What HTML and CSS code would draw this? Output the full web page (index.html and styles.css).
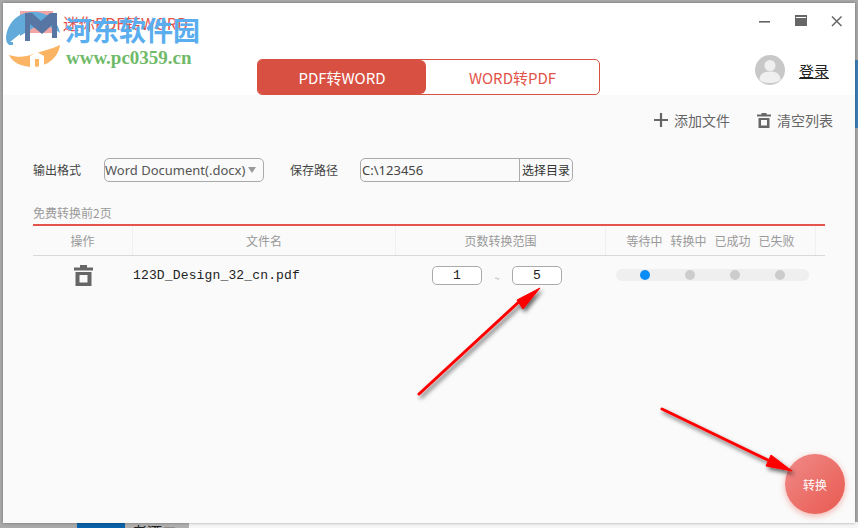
FILE: index.html
```html
<!DOCTYPE html>
<html lang="zh">
<head>
<meta charset="utf-8">
<title>迷你PDF转WORD</title>
<link rel="stylesheet" href="styles.css">
</head>
<body>
<div class="desktop">
  <div class="stripe"></div>
  <div class="taskbar">
    <div class="task-blue"></div>
    <div class="task-text">老酒二</div>
    <div class="task-white"></div>
  </div>
  <div class="window">
    <header class="head">
      <div class="titlebar">
        <div class="app-title">迷你PDF转WORD</div>
        <div class="win-controls">
          <svg class="win-icon" width="12" height="12" viewBox="0 0 12 12"><rect x="0" y="6" width="11" height="1.6" fill="#666"/></svg>
          <svg class="win-icon" width="12" height="12" viewBox="0 0 12 12"><rect x="0" y="0" width="12" height="11" fill="#666"/><rect x="1" y="2" width="10" height="1" fill="#fff"/></svg>
          <svg class="win-icon" width="12" height="12" viewBox="0 0 12 12"><path d="M1 1.5 10.5 11M10.5 1.5 1 11" stroke="#666" stroke-width="1.5" fill="none"/></svg>
        </div>
      </div>
      <div class="tabrow">
        <div class="tabs">
          <div class="tab tab-on">PDF转WORD</div>
          <div class="tab">WORD转PDF</div>
        </div>
        <div class="user">
          <svg width="30" height="30" viewBox="0 0 30 30"><circle cx="15" cy="15" r="15" fill="#c8c8c8"/><circle cx="15" cy="10.5" r="5.5" fill="#efefef"/><path d="M4.5 25c0-6 4-8.5 10.500-8.500s10.500 2.500 10.500 8.500c-2.500 1.800-6 3-10.500 3s-8-1.200-10.500-3z" fill="#efefef"/></svg>
          <span class="login">登录</span>
        </div>
      </div>
    </header>
    <main class="body">
      <div class="actions">
        <div class="action">
          <svg width="14" height="14" viewBox="0 0 14 14"><path d="M7 0v14M0 7h14" stroke="#666" stroke-width="2.200"/></svg>
          <span>添加文件</span>
        </div>
        <div class="action">
          <svg width="14" height="15" viewBox="0 0 14 15"><path d="M4.500 0h5v1.500h4.500v2h-14v-2h4.500zM1.500 5h11v10h-11zM4 7v5.500h6v-5.500z" fill="#666" fill-rule="evenodd"/></svg>
          <span>清空列表</span>
        </div>
      </div>
      <div class="form">
        <span class="label">输出格式</span>
        <div class="select"><span>Word Document(.docx)</span><i class="caret"></i></div>
        <span class="label">保存路径</span>
        <div class="path"><span class="path-val">C:\123456</span><span class="path-btn">选择目录</span></div>
      </div>
      <div class="note">免费转换前2页</div>
      <div class="table">
        <div class="thead">
          <div class="th c1">操作</div>
          <div class="th c2">文件名</div>
          <div class="th c3">页数转换范围</div>
          <div class="th c4"><span>等待中</span><span>转换中</span><span>已成功</span><span>已失败</span></div>
          <div class="th c5"></div>
        </div>
        <div class="trow">
          <div class="c1 cell-center">
            <svg width="19" height="21" viewBox="0 0 19 21"><path d="M6 0h7v2.500h6v3h-19v-3h6zM1.500 7h16v14h-16zM5.500 10v7.500h8v-7.500z" fill="#666" fill-rule="evenodd"/></svg>
          </div>
          <div class="c2 fname">123D_Design_32_cn.pdf</div>
          <div class="c3 range">
            <span class="num">1</span><span class="tilde">~</span><span class="num">5</span>
          </div>
          <div class="c4 progress-cell">
            <div class="track"><i class="dot dot-on"></i><i class="dot"></i><i class="dot"></i><i class="dot"></i></div>
          </div>
        </div>
      </div>
      <div class="convert">转换</div>
    </main>
  </div>
  <div class="wm-logo">
    <svg width="58" height="56" viewBox="0 0 58 56">
      <rect x="16" y="0" width="33" height="22" fill="#f08f8f" opacity=".85"/>
      <path d="M2 27C3 11 15 1 29 1c14 0 25 8 27 21-8-8-20-8-27-5L16 25v9H5C3 32 2 30 2 27z" fill="#5aa6d8"/>
      <path d="M21 2h7l9 8 9-8h7v25h-5V14l-10 9-12-10v17h-5z" fill="#4f6f9f"/>
      <path d="M16 23l-10 8h3v10h7z" fill="#fff"/>
      <path d="M5 44c9 3 17 2 24-1l20-6 7-3c-1 11-12 22-27 22-12 0-21-5-24-12z" fill="#fbb05c"/>
      <path d="M26 45l7-4 7 4v11h-5V48h-4v8h-5z" fill="#fff"/>
    </svg>
  </div>
  <div class="wm-name">河东软件园</div>
  <div class="wm-url">www.pc0359.cn</div>
  <svg class="arrows" width="858" height="528" viewBox="0 0 858 528">
    <defs>
      <filter id="sh" x="-20%" y="-20%" width="140%" height="140%">
        <feDropShadow dx="2" dy="3" stdDeviation="2" flood-color="#000" flood-opacity=".6"/>
      </filter>
    </defs>
    <g filter="url(#sh)" fill="#f00" stroke="#f00">
      <path d="M419 394 522 299" stroke-width="3" stroke-linecap="round"/>
      <path d="M540 288 517 300 523 309z" stroke-width="1"/>
      <path d="M662 409 772 462" stroke-width="3" stroke-linecap="round"/>
      <path d="M792 471 771 455 766 466z" stroke-width="1"/>
    </g>
  </svg>
</div>
</body>
</html>
```
FILE: styles.css
```css
* { box-sizing: border-box; }
html, body { margin: 0; padding: 0; }
body {
  width: 858px;
  height: 528px;
  overflow: hidden;
  font-family: "Noto Sans CJK SC", "Liberation Sans", sans-serif;
}
.desktop {
  position: relative;
  width: 858px;
  height: 528px;
  background: #a9a9a9;
  overflow: hidden;
}
.stripe {
  position: absolute;
  right: 0;
  top: 60px;
  width: 3px;
  height: 68px;
  background: #3f7fb5;
}
.taskbar {
  position: absolute;
  left: 77px;
  right: 0;
  bottom: 0;
  height: 6px;
  display: flex;
}
.task-blue { width: 48px; background: #0a63a8; }
.task-text {
  width: 64px;
  padding-left: 7px;
  background: #b0b0b0;
  color: #222;
  font-size: 15px;
  line-height: 20px;
  overflow: hidden;
}
.task-white { flex: 1; background: #f6f6f6; }

.window {
  position: absolute;
  left: 3px;
  top: 3px;
  width: 852px;
  height: 520px;
  background: #fafafa;
  display: flex;
  flex-direction: column;
  box-shadow: 0 0 3px rgba(0, 0, 0, .35);
}
.head {
  height: 92px;
  background: #fff;
  flex: none;
}
.titlebar {
  height: 56px;
  display: flex;
  justify-content: space-between;
  align-items: flex-start;
}
.app-title {
  margin: 9px 0 0 60px;
  color: #e2534a;
  font-size: 16px;
  line-height: 22px;
}
.win-controls {
  display: flex;
  gap: 24px;
  margin: 12px 12px 0 0;
}
.tabrow {
  display: flex;
  position: relative;
  height: 36px;
  padding-left: 254px;
}
.tabs {
  width: 343px;
  height: 36px;
  display: flex;
  border: 1px solid #d85042;
  border-radius: 5px;
  overflow: hidden;
}
.tab {
  flex: 1;
  display: flex;
  align-items: center;
  justify-content: center;
  color: #e2534a;
  font-size: 15px;
}
.tab-on {
  flex: none;
  width: 168px;
  background: #d85042;
  color: #fff;
  border-radius: 0 6px 6px 0;
}
.user {
  display: flex;
  align-items: center;
  gap: 14px;
  margin: -4px 0 0 155px;
  height: 30px;
}
.login {
  color: #222;
  font-size: 15px;
  text-decoration: underline;
}
.body {
  flex: 1;
  position: relative;
  padding: 0 30px;
}
.actions {
  display: flex;
  justify-content: flex-end;
  gap: 27px;
  padding: 15px 0 0;
  height: 53px;
}
.action {
  display: flex;
  align-items: flex-start;
  gap: 6px;
  color: #666;
  font-size: 14px;
  line-height: 20px;
  margin-right: -8px;
}
.action svg { margin-top: 3px; }
.action + .action { margin-left: 8px; margin-right: -8px; }
.form {
  display: flex;
  align-items: center;
  height: 24px;
  margin-top: 10px;
  font-size: 12px;
  color: #444;
}
.label { line-height: 24px; }
.select {
  width: 160px;
  height: 24px;
  margin: 0 26px 0 23px;
  border: 1px solid #aaa;
  border-radius: 5px;
  display: flex;
  align-items: center;
  justify-content: space-between;
  padding-right: 7px;
  font-size: 13px;
  color: #555;
  font-family: "Noto Sans", sans-serif;
  white-space: nowrap;
}
.caret {
  width: 0;
  height: 0;
  border: 4px solid transparent;
  border-top: 6px solid #999;
  border-bottom: 0;
}
.path {
  width: 213px;
  height: 24px;
  margin-left: 22px;
  border: 1px solid #aaa;
  border-radius: 5px;
  display: flex;
  align-items: center;
}
.path-val {
  flex: 1;
  padding-left: 1px;
  font-size: 13px;
  color: #444;
  font-family: "Noto Sans", sans-serif;
}
.path-btn {
  width: 53px;
  height: 22px;
  line-height: 21px;
  text-align: center;
  border-left: 1px solid #aaa;
  color: #333;
  font-size: 12px;
}
.note {
  margin-top: 21px;
  height: 21px;
  line-height: 20px;
  font-size: 12px;
  color: #999;
}
.table { width: 792px; border-top: 2px solid #e4544c; }
.thead {
  display: flex;
  height: 30px;
  border-bottom: 1px solid #d8d8d8;
}
.th {
  display: flex;
  align-items: center;
  justify-content: center;
  font-size: 12px;
  color: #999;
  border-right: 1px solid #f0f0f0;
}
.c1 { width: 100px; flex: none; }
.c2 { width: 263px; flex: none; }
.c3 { width: 210px; flex: none; }
.c4 { width: 210px; flex: none; }
.th.c4 { gap: 8px; }
.c5 { flex: 1; border-right: 0; }
.trow {
  display: flex;
  align-items: center;
  height: 38px;
}
.cell-center { display: flex; justify-content: center; }
.fname {
  font-family: "Liberation Mono", monospace;
  font-size: 13px;
  color: #222;
  letter-spacing: .15px;
}
.range {
  display: flex;
  align-items: center;
  padding-left: 36px;
}
.num {
  width: 50px;
  height: 19px;
  border: 1px solid #aaa;
  border-radius: 5px;
  background: #fff;
  text-align: center;
  font-family: "Liberation Mono", monospace;
  font-size: 13px;
  line-height: 18px;
  color: #222;
}
.tilde {
  width: 30px;
  text-align: center;
  color: #999;
  font-size: 9px;
  line-height: 12px;
  align-self: flex-start;
  margin-top: 7px;
}
.progress-cell { padding-left: 10px; }
.track {
  width: 193px;
  height: 12px;
  border-radius: 6px;
  background: #efefef;
  display: flex;
  align-items: center;
  justify-content: space-between;
  padding: 0 24px;
}
.dot { width: 10px; height: 10px; border-radius: 50%; background: #ccc; }
.dot-on { background: #0a8cf5; }
.convert {
  position: absolute;
  left: 782px;
  top: 359px;
  width: 60px;
  height: 60px;
  border-radius: 50%;
  display: flex;
  align-items: center;
  justify-content: center;
  background: linear-gradient(135deg, #f08a88, #e85a50);
  box-shadow: 0 2px 6px rgba(232, 90, 80, .45);
  color: #fff;
  font-size: 12px;
}
.wm-logo {
  position: absolute;
  left: 4px;
  top: 11px;
  opacity: .95;
}
.wm-logo svg { display: block; }
.wm-name {
  position: absolute;
  left: 65px;
  top: 11px;
  color: #5aaeef;
  font-family: "Noto Sans CJK SC", sans-serif;
  font-weight: 700;
  font-size: 27px;
  line-height: 38px;
  white-space: nowrap;
}
.wm-url {
  position: absolute;
  left: 66px;
  top: 47px;
  color: #6fba68;
  font-family: "Liberation Serif", serif;
  font-weight: 700;
  font-size: 19px;
  line-height: 21px;
  white-space: nowrap;
}
.arrows { position: absolute; left: 0; top: 0; pointer-events: none; }
```
